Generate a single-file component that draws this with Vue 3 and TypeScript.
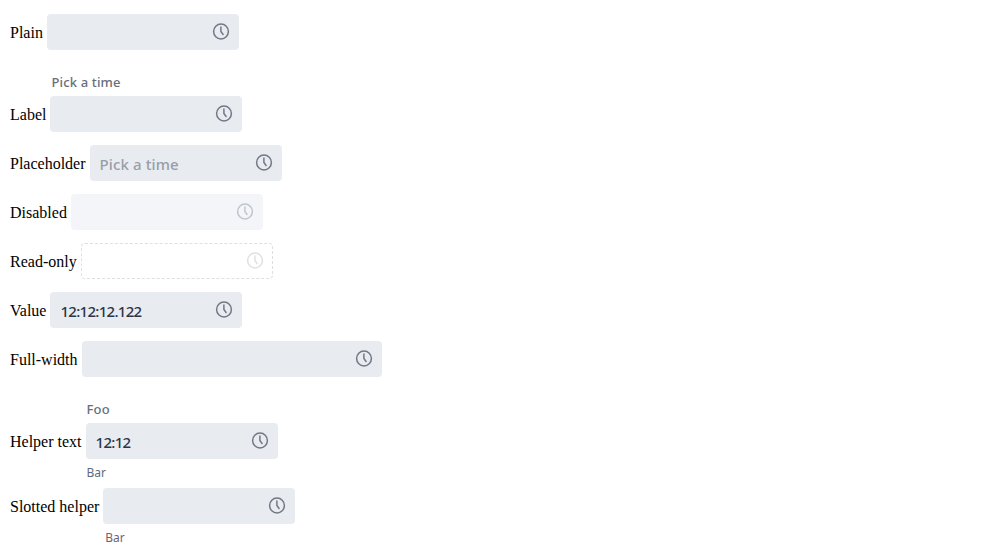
<script setup lang="ts">
interface TimeField {
  name: string
  label?: string
  placeholder?: string
  value?: string
  helper?: string
  variant?: 'disabled' | 'readonly' | 'full' | 'slotted'
}

const fields: TimeField[] = [
  { name: 'Plain' },
  { name: 'Label', label: 'Pick a time' },
  { name: 'Placeholder', placeholder: 'Pick a time' },
  { name: 'Disabled', variant: 'disabled' },
  { name: 'Read-only', variant: 'readonly' },
  { name: 'Value', value: '12:12:12.122' },
  { name: 'Full-width', variant: 'full' },
  { name: 'Helper text', label: 'Foo', value: '12:12', helper: 'Bar' },
  { name: 'Slotted helper', helper: 'Bar', variant: 'slotted' },
]
</script>

<template>
  <main class="page">
    <div v-for="field in fields" :key="field.name" class="row" :class="{ labelled: field.label }">
      <span class="name">{{ field.name }}</span>
      <div class="picker" :class="field.variant">
        <div v-if="field.label" class="label">{{ field.label }}</div>
        <div class="input">
          <span v-if="field.value" class="value">{{ field.value }}</span>
          <span v-else class="placeholder">{{ field.placeholder }}</span>
          <svg class="clock" viewBox="0 0 18 18" fill="none" stroke="currentColor" stroke-width="1.5">
            <circle cx="9" cy="9.5" r="7.4" />
            <path d="M8.9 5v4.5l2.2 3" stroke-linecap="round" stroke-linejoin="round" />
          </svg>
        </div>
        <div v-if="field.helper" class="helper">{{ field.helper }}</div>
      </div>
    </div>
  </main>
</template>

<style>
body {
  margin: 0;
  background: #fff;
}
</style>

<style scoped>
.page {
  box-sizing: border-box;
  min-height: 559px;
  display: flex;
  flex-direction: column;
  gap: 13px;
  padding: 14px 10px 0;
}
.row {
  display: flex;
  align-items: flex-start;
  gap: 4px;
}
.labelled {
  padding-top: 9px;
}
.name {
  font: 16px/18px "Liberation Serif", "Times New Roman", serif;
  color: #000;
  padding-top: 10px;
  white-space: nowrap;
}
.labelled .name {
  padding-top: 34px;
}
.picker {
  width: 192px;
  font-family: "Noto Sans", "Open Sans", sans-serif;
}
.full {
  width: 300px;
}
.label {
  height: 24px;
  padding-left: 1px;
  font-size: 13px;
  line-height: 20px;
  font-weight: 500;
  letter-spacing: 0.15px;
  color: #686e7a;
}
.input {
  box-sizing: border-box;
  height: 36px;
  display: flex;
  align-items: center;
  justify-content: space-between;
  padding: 0 9px 1px;
  border-radius: 4px;
  background: #e8ebf0;
  color: #737886;
}
.value,
.placeholder {
  font-size: 15px;
  line-height: 20px;
  font-weight: 500;
  padding-top: 3px;
}
.value {
  padding-left: 1px;
  letter-spacing: -0.7px;
  color: #2b3648;
}
.placeholder {
  padding-left: 1px;
  letter-spacing: 0.12px;
  color: #989ea8;
}
.clock {
  width: 18px;
  height: 18px;
  margin-bottom: 1px;
  overflow: visible;
}
.disabled .input {
  background: #f3f5f9;
  color: #c1c5d0;
}
.readonly .input {
  background: #fff;
  border: 1px dashed #dedfe2;
  color: #dfe1e5;
  padding: 0 8px 1px;
}
.helper {
  height: 16px;
  padding: 6px 0 0 1px;
  margin-bottom: -6px;
  font-size: 12px;
  line-height: 16px;
  color: #5d6b80;
}
.slotted .helper {
  padding-left: 2px;
  color: #706273;
}
</style>
